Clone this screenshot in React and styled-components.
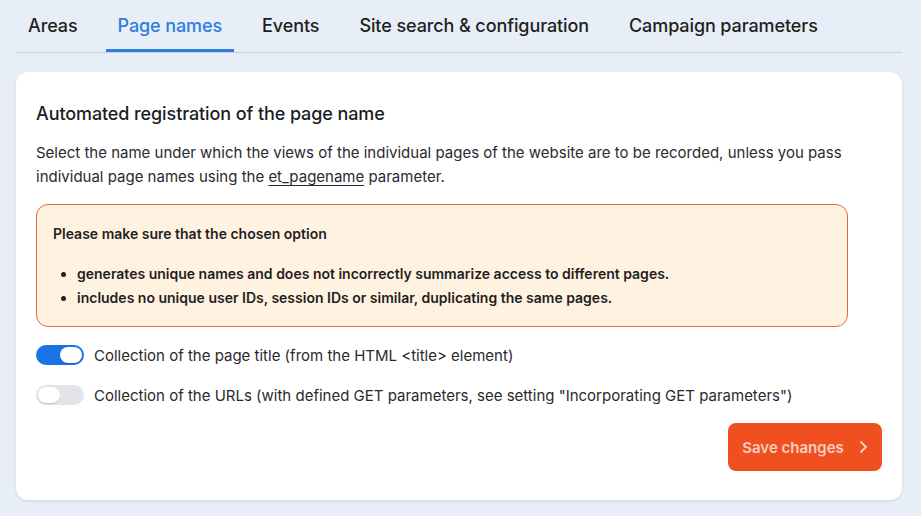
import React, { useState } from "react";
import styled, { createGlobalStyle } from "styled-components";

const Global = createGlobalStyle`
  html, body { margin: 0; padding: 0; background: #e8eef7; }
  body { font-family: Inter, "Noto Sans", sans-serif; color: #1d1d1f; }
  * { box-sizing: border-box; }
`;

const Page = styled.div`
  padding: 0 19px 16px 16px;
`;

const TabBar = styled.nav`
  display: flex;
  gap: 16px;
  border-bottom: 1px solid #c9d0da;
  height: 53px;
`;

const Tab = styled.button`
  appearance: none;
  background: none;
  border: none;
  font-family: inherit;
  font-size: 18px;
  font-weight: 500;
  letter-spacing: -0.1px;
  padding: 2px 12px 0 12px;
  height: 52px;
  color: ${(p) => (p.$active ? "#2f7ce0" : "#1f1f22")};
  border-bottom: 3px solid ${(p) => (p.$active ? "#2f7ce0" : "transparent")};
  cursor: pointer;
`;

const Card = styled.section`
  margin-top: 19px;
  background: #fff;
  border-radius: 12px;
  box-shadow: 0 1px 3px rgba(30, 40, 60, 0.12);
  padding: 29px 20px 29px 20px;
  display: flex;
  flex-direction: column;
`;

const Title = styled.h2`
  margin: 0;
  font-size: 18px;
  font-weight: 500;
  line-height: 26px;
  letter-spacing: -0.1px;
`;

const Desc = styled.p`
  margin: 14px 0 0 0;
  font-size: 15px;
  line-height: 24px;
  color: #2a2a2e;
  max-width: 810px;
`;

const Code = styled.span`
  text-decoration: underline;
  text-underline-offset: 3px;
`;

const Warning = styled.div`
  margin-top: 15px;
  width: 812px;
  background: #fff2e1;
  border: 1px solid #df6b3f;
  border-radius: 12px;
  padding: 19px 16px 16px 16px;
  font-size: 14px;
  font-weight: 600;
  color: #1f1f22;
`;

const WarnTitle = styled.div`
  line-height: 20px;
`;

const List = styled.ul`
  margin: 18px 0 0 0;
  padding-left: 24px;
  line-height: 24px;
`;

const ToggleRow = styled.label`
  display: flex;
  align-items: center;
  gap: 10px;
  font-size: 15px;
  color: #2a2a2e;
  margin-top: ${(p) => p.$mt}px;
  cursor: pointer;
`;

const Track = styled.span`
  position: relative;
  width: 48px;
  height: 20px;
  border-radius: 10px;
  background: ${(p) => (p.$on ? "#1b73e8" : "#e2e4e8")};
  flex: none;
`;

const Knob = styled.span`
  position: absolute;
  top: 2px;
  left: ${(p) => (p.$on ? "24px" : "2px")};
  width: 22px;
  height: 16px;
  border-radius: 8px;
  background: #fff;
  box-shadow: 0 1px 1px rgba(0, 0, 0, 0.15);
`;

const Footer = styled.div`
  display: flex;
  justify-content: flex-end;
  margin-top: 18px;
`;

const SaveButton = styled.button`
  appearance: none;
  border: none;
  background: #f0501f;
  color: rgba(255, 255, 255, 0.72);
  font-family: inherit;
  font-size: 15px;
  font-weight: 600;
  white-space: nowrap;
  height: 48px;
  width: 154px;
  border-radius: 8px;
  display: flex;
  align-items: center;
  justify-content: center;
  gap: 14px;
  padding: 0;
  cursor: pointer;
`;

const Toggle = ({ on, onClick, children, mt }) => (
  <ToggleRow $mt={mt} onClick={onClick}>
    <Track $on={on}>
      <Knob $on={on} />
    </Track>
    {children}
  </ToggleRow>
);

export default function App() {
  const [a, setA] = useState(true);
  const [b, setB] = useState(false);
  const tabs = ["Areas", "Page names", "Events", "Site search & configuration", "Campaign parameters"];
  return (
    <>
      <Global />
      <Page>
        <TabBar>
          {tabs.map((t) => (
            <Tab key={t} $active={t === "Page names"}>{t}</Tab>
          ))}
        </TabBar>
        <Card>
          <Title>Automated registration of the page name</Title>
          <Desc>
            Select the name under which the views of the individual pages of the website are to be recorded, unless you pass individual page names using the <Code>et_pagename</Code> parameter.
          </Desc>
          <Warning>
            <WarnTitle>Please make sure that the chosen option</WarnTitle>
            <List>
              <li>generates unique names and does not incorrectly summarize access to different pages.</li>
              <li>includes no unique user IDs, session IDs or similar, duplicating the same pages.</li>
            </List>
          </Warning>
          <Toggle on={a} onClick={() => setA(!a)} mt={18}>
            Collection of the page title (from the HTML &lt;title&gt; element)
          </Toggle>
          <Toggle on={b} onClick={() => setB(!b)} mt={20}>
            Collection of the URLs (with defined GET parameters, see setting "Incorporating GET parameters")
          </Toggle>
          <Footer>
            <SaveButton>
              Save changes
              <svg width="10" height="14" viewBox="0 0 10 14" fill="none">
                <path d="M3 2l5 5-5 5" stroke="currentColor" strokeWidth="1.8" strokeLinecap="round" strokeLinejoin="round" />
              </svg>
            </SaveButton>
          </Footer>
        </Card>
      </Page>
    </>
  );
}
